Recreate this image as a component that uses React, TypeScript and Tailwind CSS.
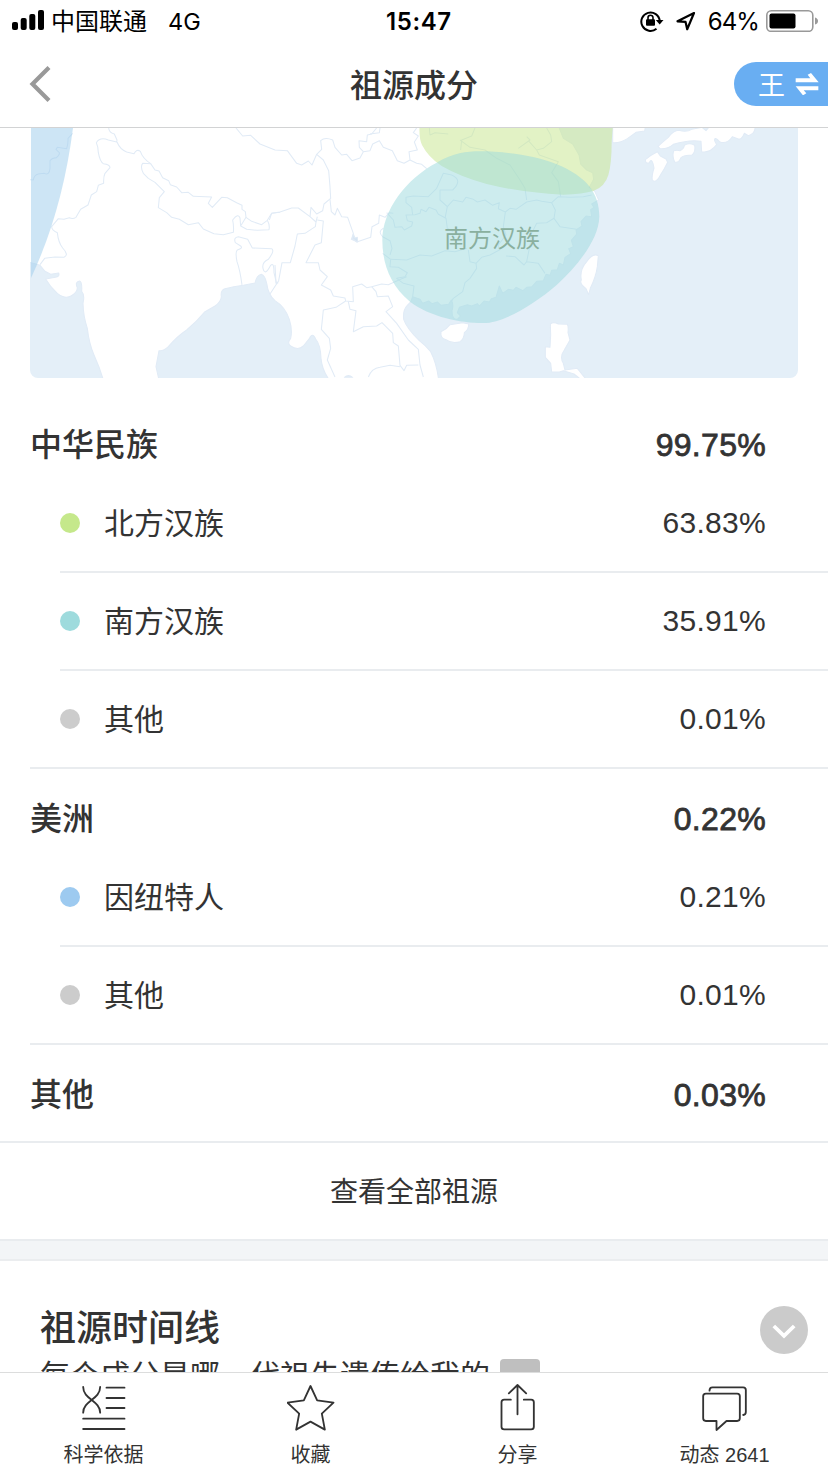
import React from 'react';

interface AncestryItem {
  name: string;
  value: string;
  dot: string;
}

interface AncestryGroup {
  name: string;
  value: string;
  items: AncestryItem[];
}

const groups: AncestryGroup[] = [
  {
    name: '中华民族',
    value: '99.75%',
    items: [
      { name: '北方汉族', value: '63.83%', dot: 'bg-[#c5e88b]' },
      { name: '南方汉族', value: '35.91%', dot: 'bg-[#9edbdd]' },
      { name: '其他', value: '0.01%', dot: 'bg-[#cccccc]' },
    ],
  },
  {
    name: '美洲',
    value: '0.22%',
    items: [
      { name: '因纽特人', value: '0.21%', dot: 'bg-[#9dcaf0]' },
      { name: '其他', value: '0.01%', dot: 'bg-[#cccccc]' },
    ],
  },
  { name: '其他', value: '0.03%', items: [] },
];

const tabs = [
  {
    label: '科学依据',
    icon: (
      <>
        <path d="M11 9C11 46 62 50 62 86M62 9C62 46 11 50 11 86" />
        <path d="M81 11H135M81 42H135M81 72H135M11 104H135M11 135H135" />
      </>
    ),
  },
  {
    label: '收藏',
    icon: <path d="M72 6L92 49L141 56L106 89L115 137L72 113L29 137L38 89L3 56L52 49Z" />,
  },
  {
    label: '分享',
    icon: (
      <>
        <path d="M72 4V91M46 28L72 3L98 28" />
        <path d="M52 47H32Q24 47 24 55V128Q24 136 32 136H113Q121 136 121 128V55Q121 47 113 47H91" />
      </>
    ),
  },
  {
    label: '动态 2641',
    icon: (
      <>
        <path d="M16 29H110Q118 29 118 37V103Q118 111 110 111H78L48 138V111H16Q8 111 8 103V37Q8 29 16 29Z" />
        <path d="M27 20Q27 10 36 10H128Q136 10 136 18V84Q136 92 128 93" />
      </>
    ),
  },
];

const StatusBar = () => (
  <div className="h-10 flex items-center justify-between text-black text-[24px] pt-0.5 pl-3 pr-[10px] font-[Inter,'Noto_Sans_CJK_SC',sans-serif]">
    <div className="flex items-center w-[374px]">
      <svg className="w-8 h-5 -mt-0.5" viewBox="0 0 32 20">
        <rect x="0" y="12" width="6" height="8" rx="2" />
        <rect x="8.7" y="8" width="6" height="12" rx="2" />
        <rect x="17.3" y="4" width="6" height="16" rx="2" />
        <rect x="26" y="0" width="6" height="20" rx="2" />
      </svg>
      <span className="ml-[7px] pt-px">中国联通</span>
      <span className="ml-[21px] pt-px text-[23.5px]">4G</span>
    </div>
    <span className="flex-1 pt-px font-semibold text-[24px] tracking-[0.6px]">15:47</span>
    <div className="flex items-center justify-end">
      <svg className="w-6 h-[22px] -mt-px" viewBox="0 0 24 22" fill="none" stroke="#000" strokeWidth="2">
        <path d="M16.5 18.7A9.2 9.2 0 1 1 19.7 11" />
        <path d="M15.8 10H23.5L19.7 14.5Z" fill="#000" stroke="none" />
        <rect x="6" y="9.2" width="9" height="6.6" rx="1" fill="#000" stroke="none" />
        <path d="M8 10V7.7A2.5 2.5 0 0 1 13 7.7V10" strokeWidth="1.6" />
      </svg>
      <svg className="ml-3 -mt-px w-5 h-5" viewBox="0 0 20 20" fill="none" stroke="#000" strokeWidth="2.2" strokeLinejoin="round">
        <path d="M18 2L1.5 10.3L9.5 10.8L11.2 18.2Z" />
      </svg>
      <span className="ml-[12px] pt-px text-[24px] tracking-[-0.9px]">64%</span>
      <svg className="ml-[7px] -mt-px w-[52px] h-[22px]" viewBox="0 0 52 22">
        <rect x="0.8" y="0.8" width="46" height="20.6" rx="4.5" fill="none" stroke="#999" strokeWidth="1.6" />
        <rect x="3.5" y="3.6" width="26" height="15" rx="2" />
        <path d="M49 7.5Q52 8.5 52 11T49 14.5Z" fill="#999" />
      </svg>
    </div>
  </div>
);

const NavBar = () => (
  <div className="h-[87px] flex items-center justify-between pt-px">
    <div className="w-[200px] pl-[29px]">
      <svg className="w-6 h-10" viewBox="0 0 24 40" fill="none" stroke="#999" strokeWidth="4.2">
        <path d="M20 3.5L3.5 20L20 36.5" />
      </svg>
    </div>
    <h1 className="text-[32px] font-medium leading-none pt-1">祖源成分</h1>
    <div className="w-[200px] flex justify-end">
      <div className="w-[94px] h-11 rounded-l-full bg-[#69aef2] text-white flex items-center pl-6">
        <span className="text-[27px] leading-none pt-[5px]">王</span>
        <svg className="ml-[10px] w-6 h-[22px]" viewBox="0 0 72 66" fill="#fff">
          <path d="M2 16H46L38 5L48 0L71 28H2Z" />
          <path d="M70 40V52H26L34 61L24 67L2 40Z" />
        </svg>
      </div>
    </div>
  </div>
);

const MapView = () => (
  <div className="relative mx-[30px] h-[250px] rounded-b-lg overflow-hidden shrink-0 bg-white">
    <svg className="w-[768px] h-[250px]" viewBox="0 0 2304 750" fill="none" stroke="#e1ebf6" strokeWidth="3.2" strokeLinejoin="round">
      {/* seas */}
      <g fill="#e4eff8">
        <path transform="translate(-30 -24)" d="M20 425L48 432L60 436L75 454L92 463L116 459Q120 470 106 472L77 477Q90 500 112 520Q135 538 153 528Q172 517 172 503Q164 486 178 483Q187 484 185 514Q195 525 189 550Q190 590 202 625Q207 670 222 705Q240 745 250 780H20Z" />
        <path transform="translate(600 -24)" d="M-213 780L-222 740L-213 692Q-200 694 -185 680Q-160 650 -130 630Q-100 605 -75 575L-45 558Q-27 545 -26 530Q-29 510 -15 506Q10 500 40 496L75 489Q80 466 94 463Q105 466 110 490Q115 525 135 542Q165 560 178 598Q188 630 182 655Q170 670 182 678Q204 693 220 678L238 656Q247 635 257 657Q272 675 273 715Q276 750 298 780Z" />
        <path transform="translate(1020 -24)" d="M206 780Q200 730 182 695Q165 675 148 662Q110 625 101 598Q98 570 112 556L122 546L128 530L150 538L158 550L176 543L186 551L202 546L213 556L236 553L244 540Q252 555 246 572Q246 600 262 598L272 588L262 578L268 562L292 554L305 558L322 551L328 558L342 543L358 546L364 536L378 532L388 498L398 520L415 508L430 511L438 502L459 512L470 502L486 500L500 484L520 482L528 463L540 466L545 451L562 449L568 430L580 435L585 412L602 401L596 386L610 380L604 361L620 342L618 330L636 318L633 305L648 288L665 290L662 269L672 262L665 252L686 240L675 215L658 202L671 178L668 158L650 150L632 132L627 105L608 72L580 55L566 20H1300V780Z" />
      </g>

      {/* islands and peninsulas */}
      <g fill="#fff">
        <path transform="translate(1020 -24)" d="M685 407Q668 398 650 425Q628 450 634 480Q627 490 648 506L656 524L661 505Q678 470 682 440Z" />
        <path transform="translate(1020 -24)" d="M296 612L278 608L240 614Q230 628 213 635Q210 655 228 659Q245 672 270 665Q283 655 283 638Q297 628 296 612Z" />
        <path transform="translate(1020 -24)" d="M541 612Q550 604 565 612L592 613Q596 620 594 638L600 660L583 690Q568 710 580 730L585 750L622 745L650 780H635L612 762L580 752L568 756H545L542 730L526 712V680L540 682L542 645Z" />
        <path transform="translate(1710 -24)" d="M38 10V68Q60 70 82 56L108 37L134 33L138 10Z" />
        <path transform="translate(1710 -24)" d="M174 79Q190 64 205 52Q220 32 237 31Q260 38 275 28L306 22L318 32L328 20H465Q467 40 445 47L433 40Q424 62 413 56L397 50Q382 73 360 66Q342 47 344 62L350 74Q330 100 305 95L303 64Q270 58 220 73Q202 88 180 86Z" />
        <path transform="translate(1710 -24)" d="M221 92Q232 90 240 92Q252 86 253 76Q268 67 284 76Q288 96 275 106Q253 104 243 113Q236 130 224 126Q216 110 221 92Z" />
        <path transform="translate(1710 -24)" d="M136 119Q155 103 172 95L181 108L198 117L203 127Q192 150 182 164Q168 192 157 180Q154 170 162 144Q156 110 148 128Q136 132 136 119Z" />
        <path transform="translate(600 -24)" d="M343 772Q355 762 368 772Z" fill="#e4eff8" />
        <path transform="translate(600 -24)" d="M364 358L370 342L375 354L382 352L383 366Z" fill="#d5e5f3" />
      </g>

      {/* borders: south asia */}
      <g transform="translate(-30 -24)">
        <path d="M30 179L40 180Q42 165 55 162L72 160Q88 168 90 145V122Q98 112 108 114Q120 105 118 98L108 88L112 82L140 86Q145 70 144 55L158 40" />
        <path d="M266 24Q267 38 283 42L291 60L290 66L265 60Q240 50 229 68Q235 80 235 98Q240 125 250 131Q270 133 270 143L255 160Q250 170 251 190L235 196L230 215L214 225L204 255L182 268L168 292Q158 298 148 293L132 298L115 296L95 320Q95 330 112 338Q115 368 128 384Q148 405 132 412L105 411L74 415L60 434" />
        <path d="M291 66Q300 88 320 96L342 101Q350 86 361 94Q368 115 392 131L405 150L417 153L428 173L446 182L451 194L470 201L485 218L505 217L520 229L575 231L565 250L577 262L605 232L622 233L650 248L666 256V268L676 275L678 292L695 304L725 314L742 301L755 280L780 277" />
        <path d="M392 131L368 130Q360 140 370 160L385 175L405 187L433 215L418 233L415 263L440 278L455 292L478 298L505 314L535 308L550 327L582 341L610 344L640 337Q642 320 638 300Q655 278 660 294L662 318L680 328L712 331L747 329Q750 315 742 301M678 292L662 318" />
        <path d="M666 495Q660 450 651 425Q645 395 652 390Q670 385 662 378L646 368Q640 352 655 350L683 358L697 384L755 386Q765 392 745 418Q725 428 729 445Q735 470 752 436Q762 425 762 458L770 492" />
      </g>

      {/* borders: southeast asia and southwest china */}
      <g transform="translate(600 -24)">
        <path d="M18 24L38 48L62 46L90 72L135 90L172 92L200 130L215 135L235 123L246 135L260 103L275 88L272 62Q285 50 308 60L315 82L335 105L350 103L366 122L390 114L400 95L388 82L387 62L410 65L412 45L425 42L440 24" />
        <path d="M400 95L420 92L428 72L448 62L460 82L487 92L502 122L522 130L540 120L560 130L575 133L590 146M540 120L537 95L562 90L553 66L565 48L550 38L560 24" />
        <path d="M260 103L280 120L296 152L300 200L302 235L282 252L278 272L260 282L243 262L240 290L258 306L256 320L225 340L202 342L195 378L181 428L156 428L146 482L120 522" />
        <path d="M118 300L125 280L150 276L185 264L205 264L240 290M258 306L262 290M262 300L280 303L274 368L255 375L228 428L265 428L270 450L292 470L274 495L302 510L310 528L345 534L347 543L370 545L368 500L395 492L410 503L425 500L455 492L475 494L515 476L530 470" />
        <path d="M300 238L304 275L315 285L322 265L335 290L353 292L370 340L368 356L380 366L422 352L426 320L446 310L448 285L465 292L478 278L490 280" />
        <path d="M135 435L138 490L145 488" />
        <path d="M347 543L318 562L280 570L274 628L298 655L302 685L292 720L315 771" />
        <path d="M355 545L360 568L378 572L370 635L400 620L440 618L456 608L488 640L490 668L505 678L510 736L522 752L530 736L565 735" />
        <path d="M415 771Q425 745 450 742L480 736L510 740" />
        <path d="M425 500L438 515L442 530L475 528L488 560L468 575L500 610L535 660L565 688L570 735L580 771" />
      </g>

      {/* borders: chinese provinces */}
      <g transform="translate(1020 -24)">
        <path d="M50 278L70 300L75 322L95 320L103 330L125 318L128 306L112 302L108 285L135 284L150 280L153 268L168 275L177 262L198 270L205 283L228 295L232 325L250 335" />
        <path d="M225 295L232 260L250 240L278 246L288 232L310 238L322 246L345 240L368 256L388 248L385 266L406 276L400 320L408 345L385 375L388 390L360 405L335 412L318 430L300 425L295 390" />
        <path d="M406 276L420 265L438 268L470 246L500 240L515 244L545 248L565 230L600 232L640 230L665 225" />
        <path d="M545 248L556 270L552 295L530 308L500 310L485 340L480 375L470 425L462 435L435 410L408 408M552 295L570 320L620 328M470 425L505 430L525 460" />
        <path d="M38 400L62 418L110 420L150 405L185 408L225 392L255 395L290 385M318 430L320 445L300 475L285 488L278 515L250 535L244 545" />
        <path d="M62 418L60 440L85 442L112 458L105 470L80 475L100 490L132 498L128 530" />
        <path d="M40 325Q22 335 38 350L60 362L66 385L60 405" />
        <path d="M232 260L210 240V210L248 210Q280 180 245 165L220 160L200 205L175 230L130 228L108 232L108 248L125 262L128 285" />
        <path d="M272 90L275 60L305 48L315 24M270 60L300 82L345 90L380 115L420 135L450 180L465 205L470 240" />
        <path d="M445 85L480 60L470 50M475 62L500 90L520 85L545 65L542 45L530 24M500 90L508 105L565 125L545 158L565 185L572 230" />
        <path d="M30 24L28 38L0 42M178 24L180 45L195 38L235 42" />
      </g>

      {/* population ranges */}
      <g stroke="none">
        <path d="M3 0H129Q97 250 3 450Z" fill="#9bcbeb" fillOpacity="0.5" />
        <path transform="translate(1020 -24)" d="M149 10Q146 55 156 75Q175 112 215 138Q270 170 350 192Q450 217 580 224Q640 222 670 213Q705 200 715 165Q725 130 725 65L729 10Z" fill="#c5e68c" fillOpacity="0.5" />
        <path transform="translate(1020 -24)" d="M37 360C37 270 110 175 200 128C250 99 290 94 330 94C400 94 500 106 560 133C650 170 688 220 688 290C686 360 620 440 560 495C490 555 400 609 340 609C270 609 180 590 120 545C60 495 37 430 37 360Z" fill="#9bd9dd" fillOpacity="0.5" />
      </g>
    </svg>
    <span className="absolute left-[414px] top-[94px] text-[24px] leading-[34px] text-[#8ab09f]">南方汉族</span>
  </div>
);

const GroupSection = ({ group }: { group: AncestryGroup }) => (
  <section>
    <div className="h-20 pt-5 pl-[30px] pr-[62px] flex items-center justify-between">
      <h2 className="text-[32px] font-medium">{group.name}</h2>
      <span className="text-[32px] pb-px tracking-[0.3px] [-webkit-text-stroke:0.8px_#333333]">{group.value}</span>
    </div>
    {group.items.map((item, i) => (
      <div key={item.name} className={i === group.items.length - 1 ? 'pl-[30px]' : 'pl-[60px]'}>
        <div
          className={`h-[98px] border-b-2 border-[#e9ecef] flex items-center pr-[62px] ${
            i === group.items.length - 1 ? 'pl-[30px]' : ''
          }`}
        >
          <span className={`w-5 h-5 rounded-full ${item.dot}`} />
          <span className="ml-6 flex-1 text-[30px]">{item.name}</span>
          <span className="text-[30px] pb-0.5 tracking-[0.3px]">{item.value}</span>
        </div>
      </div>
    ))}
  </section>
);

const TimelineSection = () => (
  <section className="pt-[38px] pl-10 pr-5">
    <div className="flex items-start justify-between">
      <h2 className="text-[36px] font-medium leading-[60px]">祖源时间线</h2>
      <button className="w-12 h-12 mt-[7px] rounded-full bg-[#cbcbcb] flex items-center justify-center">
        <svg className="w-6 h-6" viewBox="0 0 24 24" fill="none" stroke="#fff" strokeWidth="3.8">
          <path d="M1.8 8L12 17.8L22.2 8" />
        </svg>
      </button>
    </div>
    <div className="flex items-start">
      <p className="text-[30px] leading-[30px] pt-0.5">每个成分是哪一代祖先遗传给我的</p>
      <span className="ml-[10px] w-10 h-8 rounded bg-[#bfbfbf]" />
    </div>
  </section>
);

const App: React.FC = () => {
  return (
    <div className="w-[828px] h-[1472px] flex flex-col overflow-hidden bg-white text-[#333333] font-['Liberation_Sans','Noto_Sans_CJK_SC',sans-serif]">
      <header className="h-32 shrink-0 border-b border-[#d2d3d4]">
        <StatusBar />
        <NavBar />
      </header>

      <main className="flex-1 min-h-0 overflow-hidden flex flex-col">
        <MapView />
        <div className="pt-[17px] pb-4 shrink-0">
          {groups.map((group, i) => (
            <GroupSection key={i} group={group} />
          ))}
        </div>
        <button className="h-[100px] shrink-0 border-y-2 border-[#e9ecef] text-[28px] pt-1">查看全部祖源</button>
        <div className="h-5 shrink-0 bg-[#f3f5f7] border-b-2 border-[#ebedef]" />
        <TimelineSection />
      </main>

      <nav className="h-[100px] shrink-0 border-t border-[#dcdddd] grid grid-cols-4 bg-white">
        {tabs.map((tab) => (
          <button key={tab.label} className="flex flex-col items-center pt-[11px]">
            <svg
              className="w-12 h-12"
              viewBox="1.5 0 144 144"
              fill="none"
              stroke="#333333"
              strokeWidth="5.5"
              strokeLinecap="round"
              strokeLinejoin="round"
            >
              {tab.icon}
            </svg>
            <span className="mt-2 text-[20px] leading-[30px]">{tab.label}</span>
          </button>
        ))}
      </nav>
    </div>
  );
};

export default App;
